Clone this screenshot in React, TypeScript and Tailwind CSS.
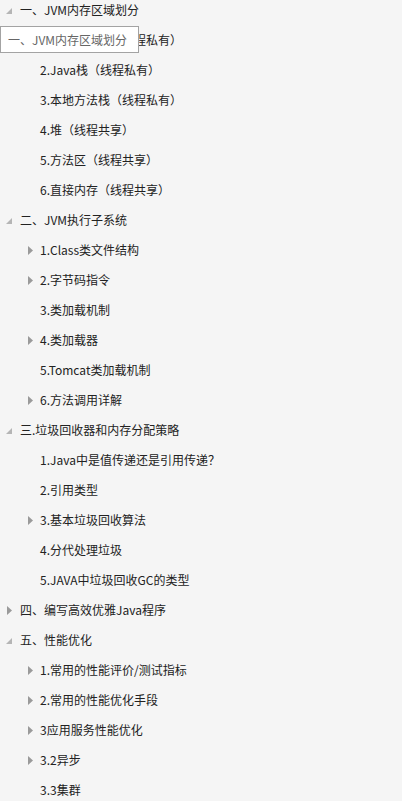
import React from "react";

type Row = { text: string; level: 0 | 1; icon: "open" | "closed" | "none" };

const rows: Row[] = [
  { text: "一、JVM内存区域划分", level: 0, icon: "open" },
  { text: "1.程序计数器（线程私有）", level: 1, icon: "none" },
  { text: "2.Java栈（线程私有）", level: 1, icon: "none" },
  { text: "3.本地方法栈（线程私有）", level: 1, icon: "none" },
  { text: "4.堆（线程共享）", level: 1, icon: "none" },
  { text: "5.方法区（线程共享）", level: 1, icon: "none" },
  { text: "6.直接内存（线程共享）", level: 1, icon: "none" },
  { text: "二、JVM执行子系统", level: 0, icon: "open" },
  { text: "1.Class类文件结构", level: 1, icon: "closed" },
  { text: "2.字节码指令", level: 1, icon: "closed" },
  { text: "3.类加载机制", level: 1, icon: "none" },
  { text: "4.类加载器", level: 1, icon: "closed" },
  { text: "5.Tomcat类加载机制", level: 1, icon: "none" },
  { text: "6.方法调用详解", level: 1, icon: "closed" },
  { text: "三.垃圾回收器和内存分配策略", level: 0, icon: "open" },
  { text: "1.Java中是值传递还是引用传递？", level: 1, icon: "none" },
  { text: "2.引用类型", level: 1, icon: "none" },
  { text: "3.基本垃圾回收算法", level: 1, icon: "closed" },
  { text: "4.分代处理垃圾", level: 1, icon: "none" },
  { text: "5.JAVA中垃圾回收GC的类型", level: 1, icon: "none" },
  { text: "四、编写高效优雅Java程序", level: 0, icon: "closed" },
  { text: "五、性能优化", level: 0, icon: "open" },
  { text: "1.常用的性能评价/测试指标", level: 1, icon: "closed" },
  { text: "2.常用的性能优化手段", level: 1, icon: "closed" },
  { text: "3应用服务性能优化", level: 1, icon: "closed" },
  { text: "3.2异步", level: 1, icon: "closed" },
  { text: "3.3集群", level: 1, icon: "none" },
];

function OpenIcon() {
  return (
    <svg width="6" height="6" viewBox="0 0 6 6" className="block">
      <polygon points="6,0 6,6 0,6" fill="#b5b5b5" />
    </svg>
  );
}

function ClosedIcon() {
  return (
    <svg width="5" height="9" viewBox="0 0 5 9" className="block">
      <polygon points="0,0 5,4.5 0,9" fill="#9a9a9a" />
    </svg>
  );
}

export default function App() {
  return (
    <div
      className="relative w-[402px] h-[801px] overflow-hidden bg-[#f5f5f5] text-[12px] text-[#222]"
      style={{ fontFamily: '"Microsoft YaHei", "Noto Sans CJK SC", "Noto Sans", sans-serif' }}
    >
      <div className="flex flex-col -mt-[2px]">
        {rows.map((r, i) => (
          <div key={i} className="relative flex items-center h-[23px] mb-[7px] whitespace-nowrap">
            {r.level === 0 ? (
              <>
                <div className="w-[20px] flex justify-start pl-[6px] items-center">
                  {r.icon === "open" ? (
                    <div className="mt-[2px]"><OpenIcon /></div>
                  ) : r.icon === "closed" ? (
                    <div className="ml-[1px] mt-[1px]"><ClosedIcon /></div>
                  ) : null}
                </div>
                <span>{r.text}</span>
              </>
            ) : (
              <>
                <div className="w-[40px] flex justify-start pl-[28px] items-center">
                  {r.icon === "closed" ? <div className="mt-[1px]"><ClosedIcon /></div> : null}
                </div>
                <span>{r.text}</span>
              </>
            )}
          </div>
        ))}
      </div>
      <div className="absolute left-0 top-[26px] w-[139px] h-[27px] bg-white border border-[#a3a3a3] flex items-center pl-[7px] text-[#666] whitespace-nowrap">
        一、JVM内存区域划分
      </div>
    </div>
  );
}
